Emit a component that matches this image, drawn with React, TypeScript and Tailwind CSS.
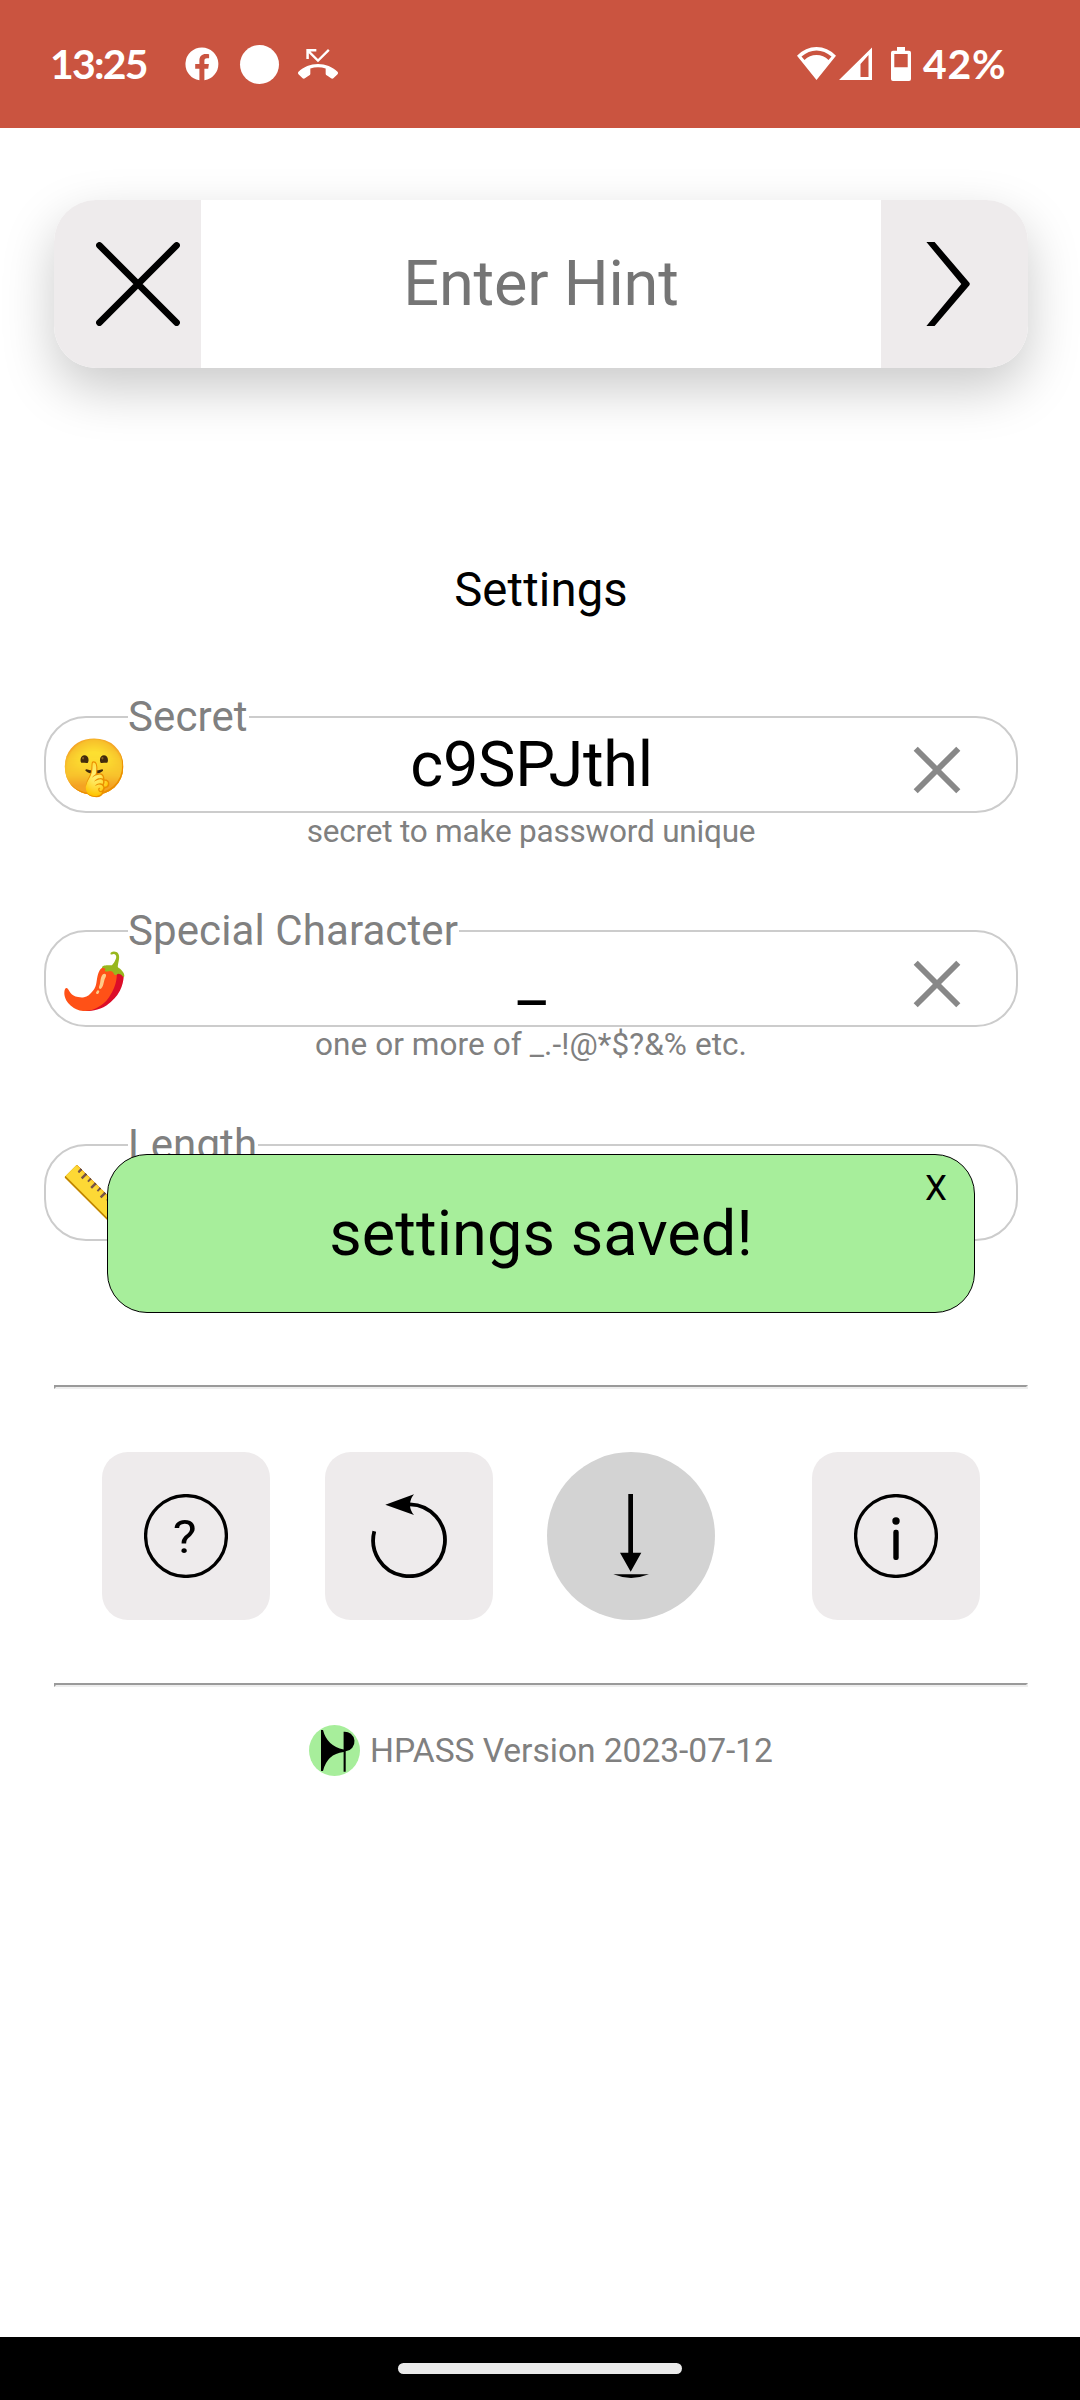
import React from "react";

function StatusBar() {
  return (
    <header className="flex h-32 items-center bg-[#ca5440] pl-[50px] pr-[73px] text-white">
      <span className="w-[96px] whitespace-nowrap pb-[2px] font-[Lato] text-[41px] font-bold leading-[41px] tracking-[-1.8px]">13:25</span>
      <svg className="ml-[39px] h-[34px] w-[34px]" viewBox="0 0 34 34" fill="currentColor">
        <path d="M17 .5a16.5 16.5 0 0 0-2.6 32.8V21.8h-4.2V17h4.2v-3.600c0-4.200 2.500-6.500 6.300-6.500 1.300 0 2.600.2 3.400.3v4.100h-2.100c-2.100 0-2.600 1.100-2.600 2.500V17h4.500l-.7 4.800h-3.800v11.500A16.500 16.500 0 0 0 17 .5z" />
      </svg>
      <span className="ml-[21px] h-[39px] w-[39px] rounded-full bg-white" />
      <svg className="ml-[19px] h-10 w-10" viewBox="0 0 24 24" fill="currentColor">
        <path d="M6.500 5.500 12 11l7-7-1-1-6 6-4.500-4.500H11V3H5v6h1.500V5.500zm17.210 11.170C20.660 13.780 16.540 12 12 12 7.460 12 3.340 13.780.29 16.670c-.18.18-.29.43-.29.71s.11.53.29.71l2.480 2.480c.18.18.43.29.71.29.27 0 .52-.11.7-.28.79-.74 1.690-1.360 2.660-1.850.33-.16.56-.5.56-.9v-3.100c1.450-.48 3-.73 4.600-.73s3.150.25 4.600.72v3.100c0 .39.23.74.56.9.98.49 1.870 1.120 2.670 1.850.18.18.43.28.7.28.28 0 .53-.11.71-.29l2.480-2.480c.18-.18.29-.43.29-.71s-.12-.52-.3-.7z" />
      </svg>
      <svg className="ml-auto h-[34px] w-[76px]" viewBox="0 0 76 34" fill="currentColor">
        <path fillRule="evenodd" d="M0 8.700Q8.500 0 19.500 0T39 8.700L19.500 33zM4.500 9.500 7.500 13Q12.500 8 19.500 8T31.500 13L34.500 9.500Q27.500 3.500 19.500 3.500T4.500 9.500z" />
        <path fillRule="evenodd" d="M42 33 75 .5V33zM63.500 17V30H71.500V8z" />
      </svg>
      <svg className="ml-[18px] h-[34px] w-5" viewBox="0 0 20 34" fill="currentColor">
        <path fillRule="evenodd" d="M6 0h8v3.700h4a2 2 0 0 1 2 2V32a2 2 0 0 1-2 2H2a2 2 0 0 1-2-2V5.700a2 2 0 0 1 2-2h4zM3.300 7v13.300h13.400V7z" />
      </svg>
      <span className="ml-3 w-[84px] whitespace-nowrap pb-[2px] font-[Lato] text-[41px] font-bold leading-[41px] tracking-[0.7px]">42%</span>
    </header>
  );
}

function SearchBar() {
  return (
    <div className="ml-[54px] mt-[72px] flex h-[168px] w-[974px] overflow-hidden rounded-[42px] bg-white shadow-[0_21px_52.5px_rgba(0,0,0,0.21)]">
      <button className="flex w-[147px] items-center bg-[#eeebec] pl-[42px]">
        <svg className="h-[84px] w-[84px]" viewBox="0 0 84 84" stroke="#000" strokeWidth="6.600" strokeLinecap="round">
          <path d="M3.400 3.400 80.600 80.600M80.600 3.400 3.400 80.600" />
        </svg>
      </button>
      <div className="flex flex-1 items-center justify-center text-[63px] leading-[74px] tracking-[-0.2px] text-[#757575]">Enter Hint</div>
      <button className="flex w-[147px] items-center bg-[#eeebec] pl-[45px]">
        <svg className="h-[84px] w-11" viewBox="0 0 44 84">
          <path d="M.4 0H8.600L43.400 40.800Q44.200 42 43.400 43.200L8.600 84H.4L35.300 42z" />
        </svg>
      </button>
    </div>
  );
}

type FieldProps = { label: string; icon: string; value: string; hint: string; hintClass?: string };

function Field({ label, icon, value, hint, hintClass = "" }: FieldProps) {
  return (
    <div className="h-[214px]">
      <div className="relative ml-[44px] flex h-[97px] w-[974px] items-center rounded-[42px] border-2 border-[#ccc] px-[14px]">
        <span className="absolute left-[82px] top-[-26px] whitespace-nowrap bg-white pr-px text-[42px] leading-[49px] tracking-[0.1px] text-[#808080]">{label}</span>
        <span className="w-[67px] whitespace-nowrap pt-1 text-[55px] leading-[64px]">{icon}</span>
        <span className="w-[808px] pl-px pt-px text-center text-[63px] leading-[74px] tracking-[-0.3px]">{value}</span>
        <svg className="absolute right-[55px] top-[28px] h-12 w-12" viewBox="0 0 48 48" stroke="#888" strokeWidth="5.800">
          <path d="M2.700 2.700 45.300 45.300M45.300 2.700 2.700 45.300" />
        </svg>
      </div>
      <p className={`ml-[44px] w-[974px] text-center text-[31.5px] text-[#808080] ${hintClass}`}>{hint}</p>
    </div>
  );
}

function Toast() {
  return (
    <div className="absolute left-[107px] top-[1154px] flex h-[159px] w-[868px] items-center justify-center rounded-[40px] border border-black bg-[#a7ee9b]">
      <span className="text-[63px] leading-[74px] tracking-[0.08px]">settings saved!</span>
      <button className="absolute right-[27px] top-[13px] text-[35px] leading-[41px]">X</button>
    </div>
  );
}

function Rule() {
  return <div className="ml-[54px] h-1 w-[974px] border-2 border-b-[#eee] border-l-[#9a9a9a] border-r-[#eee] border-t-[#9a9a9a]" />;
}

function Actions() {
  return (
    <nav className="flex h-[298px] items-center pl-[102px] pt-1">
      <button className="flex h-[168px] w-[168px] items-center justify-center rounded-[26px] bg-[#eeebec]">
        <svg className="h-[84px] w-[84px]" viewBox="0 0 84 84">
          <circle cx="42" cy="42" r="40.400" fill="none" stroke="#000" strokeWidth="3.300" />
          <text transform="translate(40.700 58.700) scale(1.100 1)" textAnchor="middle" fontSize="46" fontFamily="Roboto, sans-serif">?</text>
        </svg>
      </button>
      <button className="ml-[55px] flex h-[168px] w-[168px] items-center justify-center rounded-[26px] bg-[#eeebec]">
        <svg className="h-[84px] w-[84px]" viewBox="0 0 84 84">
          <path d="M43 10.400A35.900 35.900 0 1 1 7.300 37.300" fill="none" stroke="#000" strokeWidth="3.800" />
          <path d="M18.300 10.700 47 .3Q43 5 43 10.700T47 21z" />
        </svg>
      </button>
      <button className="ml-[54px] flex h-[168px] w-[168px] items-center justify-center rounded-full bg-[#d3d3d3]">
        <svg className="h-[84px] w-[84px]" viewBox="0 0 84 84">
          <path d="M39.300 0H44V58.700H52.300L41.700 77.700 31 58.700H39.300z" />
          <path d="M24.300 80.300H60Q42 87.500 24.300 80.300z" />
        </svg>
      </button>
      <button className="ml-[97px] flex h-[168px] w-[168px] items-center justify-center rounded-[26px] bg-[#eeebec]">
        <svg className="h-[84px] w-[84px]" viewBox="0 0 84 84">
          <circle cx="42" cy="42" r="40.400" fill="none" stroke="#000" strokeWidth="3.300" />
          <circle cx="42" cy="27" r="3.700" />
          <rect x="39.300" y="35.700" width="5.400" height="30.300" rx="2.200" />
        </svg>
      </button>
    </nav>
  );
}

function Footer() {
  return (
    <footer className="mt-[38px] flex h-[51px] items-center pl-[309px] text-[33.6px] text-[#808080]">
      <svg className="h-[51px] w-[51px]" viewBox="0 0 51 51">
        <circle cx="25.500" cy="25.500" r="25.500" fill="#a7ee9b" />
        <path d="M12 5h2Q18 21 34.600 24.500V6.700A9.800 9.800 0 0 1 36.700 26.300V46.700H34.600V27Q18 29 14 46H12z" fill="#000" />
      </svg>
      <span className="ml-[10px] whitespace-nowrap leading-[40px] tracking-[-0.04px]">HPASS Version 2023-07-12</span>
    </footer>
  );
}

export default function App() {
  return (
    <div className="relative flex h-[2400px] w-[1080px] flex-col overflow-hidden bg-white font-[Roboto,sans-serif] text-black">
      <StatusBar />
      <SearchBar />
      <h1 className="mt-[194px] h-[154px] pl-[2px] text-center text-[47.25px] leading-[56px] tracking-[0.15px]">Settings</h1>
      <Field label="Secret" icon="🤫" value="c9SPJthl" hint="secret to make password unique" hintClass="leading-[37px] tracking-[-0.2px]" />
      <Field label="Special Character" icon="🌶️" value="_" hint="one or more of _.-!@*$?&% etc." hintClass="leading-[35px] tracking-[0.08px]" />
      <Field label="Length" icon="📏" value="" hint="" />
      <div className="mt-[27px]">
        <Rule />
      </div>
      <div className="-mt-1">
        <Actions />
        <Rule />
      </div>
      <Footer />
      <div className="mt-auto flex h-[63px] justify-center bg-black pt-[26px]">
        <span className="h-[11px] w-[284px] rounded-full bg-[#eaeaea]" />
      </div>
      <Toast />
    </div>
  );
}
